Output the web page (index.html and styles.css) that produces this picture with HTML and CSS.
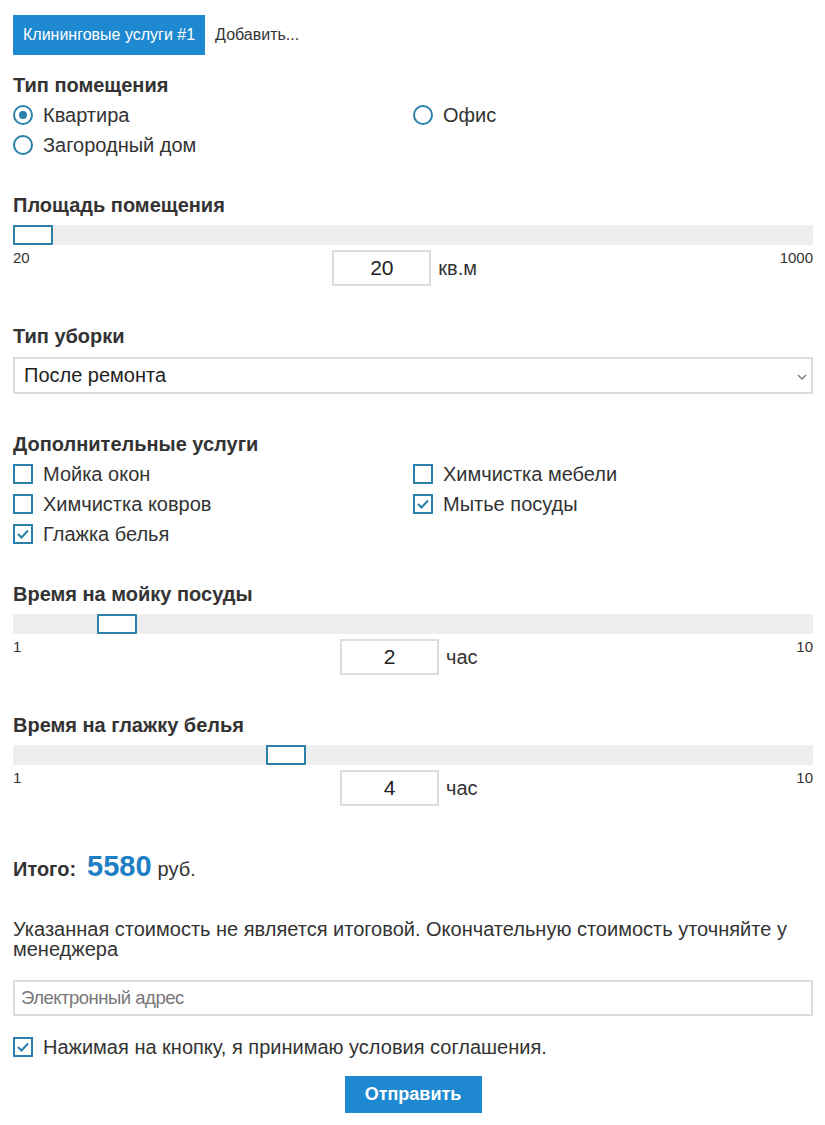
FILE: index.html
```html
<!DOCTYPE html>
<html lang="ru">
<head>
<meta charset="utf-8">
<title>Калькулятор клининга</title>
<link rel="stylesheet" href="styles.css">
</head>
<body>
<div class="calc">
  <div class="tabs">
    <div class="tab active">Клининговые услуги #1</div>
    <div class="tab">Добавить...</div>
  </div>

  <div class="field">
    <div class="title">Тип помещения</div>
    <div class="options">
      <label class="opt"><span class="radio checked"></span>Квартира</label>
      <label class="opt"><span class="radio"></span>Офис</label>
      <label class="opt"><span class="radio"></span>Загородный дом</label>
    </div>
  </div>

  <div class="field">
    <div class="title">Площадь помещения</div>
    <div class="track"><span class="handle" style="left:0px"></span></div>
    <div class="range-row">
      <span class="lim">20</span>
      <span class="val"><span class="num">20</span><span class="unit">кв.м</span></span>
      <span class="lim">1000</span>
    </div>
  </div>

  <div class="field">
    <div class="title title-select">Тип уборки</div>
    <div class="select">
      <span>После ремонта</span>
      <svg class="chev" width="10" height="6" viewBox="0 0 10 6"><polyline points="1,1 5,5 9,1" fill="none" stroke="#777" stroke-width="1.3"/></svg>
    </div>
  </div>

  <div class="field">
    <div class="title">Дополнительные услуги</div>
    <div class="options">
      <label class="opt"><span class="check"></span>Мойка окон</label>
      <label class="opt"><span class="check"></span>Химчистка мебели</label>
      <label class="opt"><span class="check"></span>Химчистка ковров</label>
      <label class="opt"><span class="check"><svg width="16" height="16" viewBox="0 0 16 16"><polyline points="3,8 6.5,11.5 13,4.5" fill="none" stroke="#2a7fab" stroke-width="2"/></svg></span>Мытье посуды</label>
      <label class="opt"><span class="check"><svg width="16" height="16" viewBox="0 0 16 16"><polyline points="3,8 6.5,11.5 13,4.5" fill="none" stroke="#2a7fab" stroke-width="2"/></svg></span>Глажка белья</label>
    </div>
  </div>

  <div class="field">
    <div class="title">Время на мойку посуды</div>
    <div class="track"><span class="handle" style="left:84px"></span></div>
    <div class="range-row">
      <span class="lim">1</span>
      <span class="val"><span class="num">2</span><span class="unit">час</span></span>
      <span class="lim">10</span>
    </div>
  </div>

  <div class="field">
    <div class="title">Время на глажку белья</div>
    <div class="track"><span class="handle" style="left:253px"></span></div>
    <div class="range-row">
      <span class="lim">1</span>
      <span class="val"><span class="num">4</span><span class="unit">час</span></span>
      <span class="lim">10</span>
    </div>
  </div>

  <div class="total">
    <span class="total-label">Итого:</span>
    <span class="total-sum">5580</span>
    <span class="total-cur">руб.</span>
  </div>

  <p class="note">Указанная стоимость не является итоговой. Окончательную стоимость уточняйте у менеджера</p>

  <div class="email">Электронный адрес</div>

  <label class="opt agree"><span class="check"><svg width="16" height="16" viewBox="0 0 16 16"><polyline points="3,8 6.5,11.5 13,4.5" fill="none" stroke="#2a7fab" stroke-width="2"/></svg></span>Нажимая на кнопку, я принимаю условия соглашения.</label>

  <div class="submit-row"><button class="submit">Отправить</button></div>
</div>
</body>
</html>
```

FILE: styles.css
```css
* { box-sizing: border-box; }
body {
  margin: 0;
  background: #fff;
  font-family: "Liberation Sans", Arial, sans-serif;
  color: #333;
}
.calc {
  width: 825px;
  padding: 15px 12px 0 13px;
}
.tabs {
  display: flex;
  height: 40px;
}
.tab {
  display: flex;
  align-items: center;
  padding: 0 10px;
  font-size: 16px;
  color: #333;
}
.tab.active {
  background: #1e88d0;
  color: #fff;
}
.field {
  margin-top: 20px;
  margin-bottom: 40px;
}
.field + .field { margin-top: 0; }
.title {
  font-size: 20px;
  font-weight: bold;
  line-height: 20px;
  margin-bottom: 10px;
  color: #333;
}
.title-select { margin-bottom: 11px; }
.options {
  display: grid;
  grid-template-columns: 400px 400px;
  margin: -5px 0 -5px;
}
.opt {
  display: flex;
  align-items: center;
  height: 30px;
  font-size: 20px;
  color: #333;
}
.radio {
  width: 20px;
  height: 20px;
  border: 2px solid #2a7fab;
  border-radius: 50%;
  margin-right: 10px;
  flex: none;
  display: flex;
  align-items: center;
  justify-content: center;
}
.radio.checked::after {
  content: "";
  width: 8px;
  height: 8px;
  border-radius: 50%;
  background: #2a7fab;
}
.check {
  width: 20px;
  height: 20px;
  border: 2px solid #2a7fab;
  margin-right: 10px;
  flex: none;
  display: flex;
  align-items: center;
  justify-content: center;
}
.check svg { display: block; }
.track {
  position: relative;
  height: 20px;
  background: #eeeeee;
}
.handle {
  position: absolute;
  top: 0;
  width: 40px;
  height: 20px;
  border: 2px solid #2a7fab;
  background: #fff;
  border-radius: 1px;
}
.range-row {
  display: flex;
  justify-content: space-between;
  align-items: flex-start;
  margin-top: 5px;
}
.lim {
  font-size: 15px;
  line-height: 16px;
  color: #333;
}
.val {
  display: flex;
  align-items: center;
}
.num {
  width: 99px;
  height: 36px;
  border: 2px solid #dddddd;
  display: flex;
  align-items: center;
  justify-content: center;
  font-size: 21px;
  color: #222;
}
.unit {
  margin-left: 7px;
  font-size: 20px;
  color: #333;
}
.select {
  position: relative;
  height: 37px;
  border: 2px solid #dddddd;
  display: flex;
  align-items: center;
  padding-left: 9px;
  font-size: 20px;
  color: #222;
}
.chev {
  position: absolute;
  right: 4px;
  top: 15px;
}
.total {
  display: flex;
  align-items: baseline;
  margin-top: 44px;
  height: 34px;
}
.total-label {
  font-size: 20px;
  font-weight: bold;
  color: #333;
  margin-right: 11px;
}
.total-sum {
  font-size: 29px;
  font-weight: bold;
  color: #1f7fc4;
  margin-right: 6px;
}
.total-cur {
  font-size: 20px;
  color: #333;
}
.note {
  margin: 35px 0 0;
  font-size: 20px;
  line-height: 20px;
  color: #333;
}
.email {
  margin-top: 21px;
  height: 36px;
  border: 2px solid #dddddd;
  display: flex;
  align-items: center;
  padding-left: 6px;
  font-size: 18.5px;
  letter-spacing: -0.5px;
  color: #777;
}
.agree {
  margin-top: 16px;
}
.submit-row {
  display: flex;
  justify-content: center;
  margin-top: 14px;
}
.submit {
  width: 137px;
  height: 37px;
  border: none;
  background: #1e88d0;
  color: #fff;
  font-family: "Liberation Sans", Arial, sans-serif;
  font-size: 18px;
  font-weight: bold;
  padding: 0;
}
```
